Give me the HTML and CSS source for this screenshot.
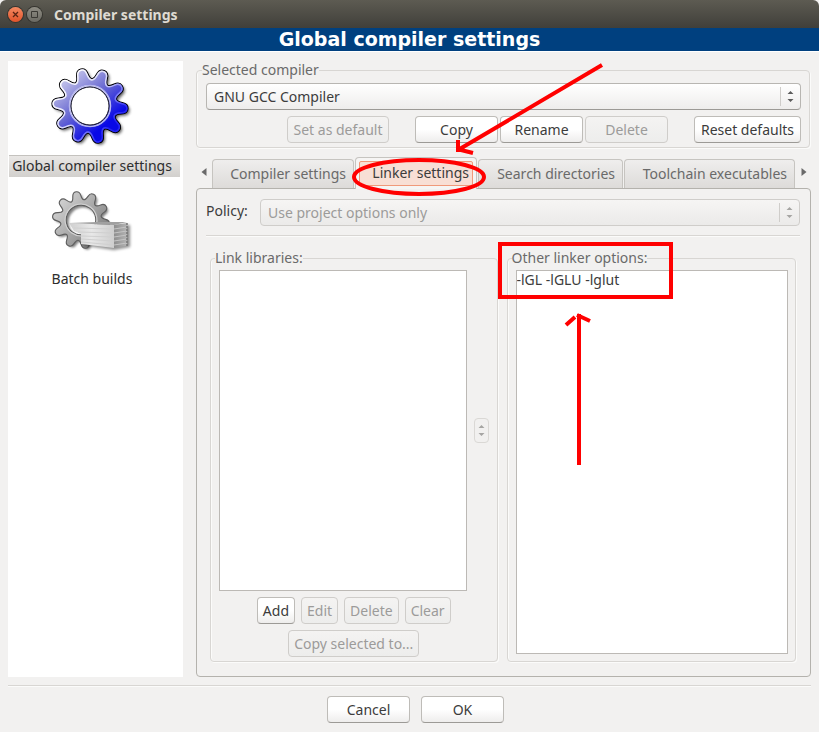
FILE: index.html
```html
<!DOCTYPE html>
<html lang="en">
<head>
<meta charset="utf-8">
<title>Compiler settings</title>
<link rel="stylesheet" href="styles.css">
</head>
<body>
<div class="window">
  <header class="titlebar">
    <button class="winbtn close" aria-label="Close"><svg width="15" height="15" viewBox="0 0 15 15"><path d="M5 5l5 5M10 5l-5 5" stroke="#5a2413" stroke-width="1.3"/></svg></button>
    <button class="winbtn" aria-label="Maximize"><svg width="15" height="15" viewBox="0 0 15 15"><path d="M4.500 4.500h6v6h-6z" fill="none" stroke="#3a3934"/></svg></button>
    <span class="title">Compiler settings</span>
  </header>
  <h1 class="banner">Global compiler settings</h1>

  <main class="content">
    <nav class="sidebar">
      <a class="item" href="#global">
        <svg class="icon" width="90" height="88" viewBox="-45 -44 90 88">
          <defs>
            <linearGradient id="blue" gradientUnits="userSpaceOnUse" x1="-24" y1="-28" x2="14" y2="20"><stop offset="0" stop-color="#c3c3ea"/><stop offset=".5" stop-color="#6a6ad2"/><stop offset="1" stop-color="#0808e6"/></linearGradient>
            <linearGradient id="rim" gradientUnits="userSpaceOnUse" x1="-20" y1="-28" x2="16" y2="24"><stop offset="0" stop-color="#fff"/><stop offset=".5" stop-color="#d4d4f6"/><stop offset="1" stop-color="#2828f0"/></linearGradient>
            <linearGradient id="grey" gradientUnits="userSpaceOnUse" x1="-24" y1="-28" x2="24" y2="28"><stop offset="0" stop-color="#cfcfcf"/><stop offset=".5" stop-color="#a8a8a8"/><stop offset="1" stop-color="#7c7c7c"/></linearGradient>
            <linearGradient id="paper" x1="0" y1="0" x2="1" y2="0"><stop offset="0" stop-color="#cfcfcf"/><stop offset=".5" stop-color="#e8e8e8"/><stop offset="1" stop-color="#cecece"/></linearGradient>
            <linearGradient id="side" x1="0" y1="0" x2="1" y2="0"><stop offset="0" stop-color="#8e8e8e"/><stop offset="1" stop-color="#b4b4b4"/></linearGradient>
            <filter id="soft" x="-20%" y="-20%" width="140%" height="140%"><feGaussianBlur stdDeviation="1.400"/></filter>
            <path id="gear" fill-rule="evenodd" d="M0-37.700Q4.600-37.700 5.350-32T8.300-25.600T14.450-29.100T22.150-30.550T23.150-22.750T21.750-15.800T28.750-15T35.850-11.700T32.100-4.850T26.900 0T32.100 4.850T35.850 11.700T28.750 15T21.750 15.800T23.150 22.750T22.150 30.550T14.450 29.100T8.300 25.600T5.350 32T0 37.700T-5.350 32T-8.300 25.600T-14.450 29.100T-22.150 30.550T-23.150 22.750T-21.750 15.800T-28.750 15T-35.850 11.700T-32.100 4.850T-26.900 0T-32.100-4.850T-35.850-11.700T-28.750-15T-21.750-15.800T-23.150-22.750T-22.150-30.550T-14.450-29.100T-8.300-25.600T-5.350-32T0-37.700ZM19.500 0A19.500 19.500 0 1 0-19.500 0A19.500 19.500 0 1 0 19.500 0Z"/>
            <clipPath id="gearclip"><use href="#gear" transform="rotate(-14)" clip-rule="evenodd"/></clipPath>
          </defs>
          <g transform="translate(2 2) rotate(-14)" opacity=".65" filter="url(#soft)"><use href="#gear"/></g>
          <use href="#gear" transform="rotate(-14)" fill="none" stroke="#000" stroke-width="2"/>
          <rect x="-42" y="-42" width="84" height="84" fill="url(#blue)" clip-path="url(#gearclip)"/>
          <circle r="18.500" fill="#fff"/>
          <g clip-path="url(#gearclip)"><use href="#gear" transform="rotate(-14)" fill="none" stroke="url(#rim)" stroke-width="3"/></g>
          <circle r="20.500" fill="none" stroke="#b9b9ee" stroke-width="1.500"/>
          <circle r="19" fill="#fff" stroke="#15152c" stroke-width="1"/>
        </svg>
        <span class="name selected">Global compiler settings</span>
      </a>
      <a class="item batch" href="#batch">
        <svg class="icon" width="90" height="76" viewBox="0 0 90 76">
          <g transform="translate(38 37) rotate(-10) scale(.74)" opacity=".5" filter="url(#soft)"><use href="#gear"/></g>
          <g transform="translate(36 35) rotate(-10) scale(.76)">
            <use href="#gear" fill="url(#grey)" stroke="#5e5e5e" stroke-width="1.500"/>
            <circle r="21" fill="none" stroke="#d2d2d2" stroke-width="1.500"/>
          </g>
          <path d="M36 60l33 5 16-3V40H69z" opacity=".45" filter="url(#soft)"/>
          <path d="M24 38l45 2v23l-33-4V49l-7-3z" fill="url(#paper)"/>
          <path d="M24 38l28-1 30 0-13 3z" fill="#a0a0a0"/>
          <path d="M69 40l13-2v23l-13 2z" fill="url(#side)"/>
          <path d="M29 43l40 1M33 47l36 1M36 51l33 1M36 54l33 2M36 57l33 3" stroke="#d0d0d0" stroke-width="1"/>
          <path d="M69 44l13-2M69 48l13-2M69 52l13-2M69 56l13-2M69 60l13-2" stroke="#c4c4c4" stroke-width="1"/>
          <path d="M82 38v23" stroke="#777" stroke-width="1.500" stroke-dasharray="2 1"/>
        </svg>
        <span class="name">Batch builds</span>
      </a>
    </nav>

    <div class="settings">
      <fieldset class="group compiler">
        <legend>Selected compiler</legend>
        <div class="combo">
          <select aria-label="Selected compiler"><option>GNU GCC Compiler</option></select>
          <svg class="arrows" width="7" height="13" viewBox="0 0 7 13"><path d="M.5 4L3.500 1l3 3zM.5 9h6l-3 3z"/></svg>
        </div>
        <div class="actions">
          <button class="btn default" disabled>Set as default</button>
          <button class="btn">Copy</button>
          <button class="btn">Rename</button>
          <button class="btn" disabled>Delete</button>
          <button class="btn reset">Reset defaults</button>
        </div>
      </fieldset>

      <div class="tabs">
        <button class="scroll" aria-label="Previous tab"><svg width="6" height="8" viewBox="0 0 6 8"><path d="M5.500 0v8L.5 4z"/></svg></button>
        <div class="tablist" role="tablist">
          <button class="tab" role="tab">Compiler settings</button>
          <button class="tab active" role="tab" aria-selected="true"><span>Linker settings</span></button>
          <button class="tab" role="tab">Search directories</button>
          <button class="tab" role="tab">Toolchain executables</button>
        </div>
        <button class="scroll next" aria-label="Next tab"><svg width="6" height="8" viewBox="0 0 6 8"><path d="M.5 0v8l5-4z"/></svg></button>
      </div>

      <section class="panel">
        <div class="policy">
          <label for="policy">Policy:</label>
          <div class="combo">
            <select id="policy" disabled><option>Use project options only</option></select>
            <svg class="arrows dim" width="7" height="13" viewBox="0 0 7 13"><path d="M.5 4L3.500 1l3 3zM.5 9h6l-3 3z"/></svg>
          </div>
        </div>
        <hr class="rule">
        <div class="columns">
          <fieldset class="group libs">
            <legend>Link libraries:</legend>
            <div class="listrow">
              <select class="list" size="8" aria-label="Link libraries"></select>
              <button class="spin" disabled aria-label="Move library"><svg class="dim" width="7" height="13" viewBox="0 0 7 13"><path d="M.5 4L3.500 1l3 3zM.5 9h6l-3 3z"/></svg></button>
            </div>
            <div class="edit">
              <button class="btn">Add</button>
              <button class="btn" disabled>Edit</button>
              <button class="btn" disabled>Delete</button>
              <button class="btn" disabled>Clear</button>
            </div>
            <div class="edit">
              <button class="btn" disabled>Copy selected to...</button>
            </div>
          </fieldset>
          <fieldset class="group other">
            <legend>Other linker options:</legend>
            <textarea class="options" aria-label="Other linker options" spellcheck="false">-lGL -lGLU -lglut</textarea>
          </fieldset>
        </div>
      </section>
    </div>
  </main>

  <footer class="footer">
    <button class="btn">Cancel</button>
    <button class="btn">OK</button>
  </footer>

  <svg class="marks" width="819" height="732" viewBox="0 0 819 732" fill="none" stroke="#f00" stroke-width="4">
    <ellipse cx="419" cy="177" rx="65" ry="17"/>
    <path d="M602 65L458 150M458 140v12M457 149l16 4"/>
    <path d="M500 244h171v53H500z"/>
    <path d="M579 465V314M577 315l13 6M575 317l-9 8" />
  </svg>
</div>
</body>
</html>
```
FILE: styles.css
```css
* { box-sizing: border-box; }

body {
  margin: 0;
  background: #f2f1f0;
  color: #3c3c3c;
  font: 14px/20px "Noto Sans", "Open Sans", sans-serif;
}

button, select, textarea { font: inherit; color: inherit; margin: 0; }

.window {
  position: relative;
  display: flex;
  flex-direction: column;
  min-height: 100vh;
}

.titlebar {
  display: flex;
  align-items: center;
  gap: 4px;
  height: 28px;
  padding: 1px 8px 0;
  background: linear-gradient(#5d5b52, #403f3a);
  border-radius: 6px 6px 0 0;
}

.winbtn {
  width: 15px;
  height: 15px;
  padding: 0;
  border: 0;
  border-radius: 50%;
  background: linear-gradient(#8f8d84, #6b6a63);
  box-shadow: 0 0 0 1px #35342f;
}

.winbtn svg { display: block; }
.close { background: linear-gradient(#f58a62, #e2532a); }

.title {
  margin-left: 8px;
  color: #dfdbd2;
  font-weight: 700;
}

.banner {
  margin: 0;
  height: 24px;
  border-bottom: 1px solid #fff;
  background: #00407f;
  color: #fff;
  font: 700 19px/23px "DejaVu Sans", sans-serif;
  text-align: center;
}

.content {
  display: flex;
  flex: 1;
  gap: 13px;
  padding: 9px 8px 8px;
}

.sidebar {
  flex: 0 0 175px;
  padding: 1px 3px 1px 1px;
  background: #fff;
}

.item {
  display: flex;
  flex-direction: column;
  align-items: center;
  color: #2e2e2e;
  text-decoration: none;
}

.icon { display: block; margin-right: 10px; }

.name {
  width: 100%;
  margin-top: 5px;
  height: 22px;
  padding-right: 5px;
  text-align: center;
  white-space: nowrap;
}

.selected {
  border-top: 1px solid #c4c2be;
  background: linear-gradient(#e9e7e5, #d2d0cd);
}

.batch { margin-top: 8px; }
.batch .name { margin-top: 8px; }

.settings {
  display: flex;
  flex: 1;
  flex-direction: column;
  min-width: 0;
}

.group {
  min-width: 0;
  margin: 0;
  border: 1px solid #d8d6d3;
  border-radius: 4px;
  box-shadow: inset 1px 0 #fbfbfa, 1px 1px #fbfbfa;
}

.group legend {
  margin-left: -4px;
  padding: 0;
  color: #6a6a6a;
  background: #f2f1f0;
}

.compiler {
  margin: -1px 1px 8px 0;
  padding: 3px 8px 4px 9px;
}

.combo { position: relative; flex: 1; }

.combo select {
  display: block;
  width: 100%;
  height: 27px;
  padding: 0 30px 0 7px;
  border: 1px solid #b8b6b2;
  border-bottom-color: #9c9a96;
  border-radius: 4px;
  background: linear-gradient(#fff, #eeedec);
  appearance: none;
}

.combo select:disabled {
  border-color: #cfcdca;
  background: linear-gradient(#f6f5f4, #ebeae9);
  color: #9c9b9a;
  opacity: 1;
}

.arrows {
  position: absolute;
  top: 7px;
  right: 7px;
  pointer-events: none;
  fill: #5c5c5c;
}

.combo::after {
  content: "";
  position: absolute;
  top: 4px;
  right: 20px;
  width: 1px;
  height: 19px;
  background: #cfcdca;
}

.dim { fill: #a6a5a3; }

.btn {
  min-width: 0;
  height: 27px;
  padding: 0 4px;
  border: 1px solid #bebcb8;
  border-bottom-color: #9c9a96;
  border-radius: 4px;
  background: linear-gradient(#fff 50%, #eeedec);
  white-space: nowrap;
}

.btn:disabled {
  border-color: #cfcdca;
  background: linear-gradient(#f4f3f2, #ededec);
  color: #9c9b9a;
}

.actions {
  display: flex;
  justify-content: flex-end;
  gap: 2px;
  margin-top: 6px;
}

.actions .btn { flex: 0 0 83px; }
.actions .default { flex-basis: 102px; margin-right: 24px; }
.actions .reset { flex-basis: 107px; margin-left: 24px; }

.tabs {
  display: flex;
  align-items: center;
  height: 32px;
}

.scroll {
  display: flex;
  align-items: center;
  justify-content: center;
  flex: 0 0 16px;
  height: 32px;
  padding: 0;
  border: 0;
  background: none;
  fill: #6a6a6a;
}

.next { justify-content: flex-end; padding-right: 4px; }

.tablist {
  display: grid;
  flex: 1;
  grid-template-columns: 142fr 122fr 145fr 171fr;
  align-items: end;
  gap: 0 1px;
  height: 32px;
}

.tab {
  height: 29px;
  padding: 0 7px;
  border: 1px solid #c6c4c0;
  border-bottom: 0;
  border-radius: 4px 4px 0 0;
  background: linear-gradient(#efeeed, #dddbd9);
  color: #6a6a6a;
  text-align: right;
  white-space: nowrap;
}

.active {
  z-index: 1;
  height: 32px;
  margin-bottom: -1px;
  padding: 3px;
  background: #f6f5f4;
  color: #3c3c3c;
}

.active span {
  display: block;
  height: 25px;
  padding: 1px 3px;
  border: 1px solid #f0997a;
  border-radius: 2px;
  background: #f8dfd5;
}

.panel {
  display: flex;
  flex: 1;
  flex-direction: column;
  padding: 10px 10px 14px 9px;
  border: 1px solid #b4b2ad;
  border-radius: 4px;
}

.policy { display: flex; gap: 8px; }
.policy label { width: 46px; line-height: 24px; }

.rule {
  width: 100%;
  margin: 9px 0 11px;
  border: 0;
  border-top: 1px solid #d8d6d3;
  border-bottom: 1px solid #fbfbfa;
}

.columns {
  display: grid;
  flex: 1;
  grid-template-columns: 288fr 290fr;
  gap: 9px;
  padding: 0 4px;
}

.libs, .other {
  display: flex;
  flex-direction: column;
  padding: 2px 8px 4px;
}

.other { padding-right: 7px; padding-bottom: 7px; }

.listrow {
  display: flex;
  flex: 1;
  align-items: center;
  gap: 7px;
}

.list {
  align-self: stretch;
  flex: 1;
  height: auto;
  border: 1px solid #bcb9b5;
  border-radius: 0;
  background: #fff;
}

.spin {
  display: flex;
  align-items: center;
  justify-content: center;
  width: 15px;
  height: 25px;
  padding: 0;
  border: 1px solid #dad8d5;
  border-radius: 4px;
  background: #f1f0ef;
}

.edit {
  display: flex;
  justify-content: center;
  gap: 6px;
  margin-top: 6px;
}

.edit .btn { padding: 0 5px; }

.options {
  flex: 1;
  width: 100%;
  padding: 0;
  border: 1px solid #bcb9b5;
  outline: 0;
  resize: none;
  background: #fff;
  line-height: 18px;
}

.footer {
  display: flex;
  justify-content: center;
  gap: 11px;
  margin: 0 8px;
  padding: 10px 0 9px 12px;
  border-top: 1px solid #d8d6d3;
  box-shadow: inset 0 1px #fbfbfa;
}

.footer .btn { width: 83px; }

.marks {
  position: absolute;
  top: 0;
  left: 0;
  z-index: 2;
  pointer-events: none;
}
```
